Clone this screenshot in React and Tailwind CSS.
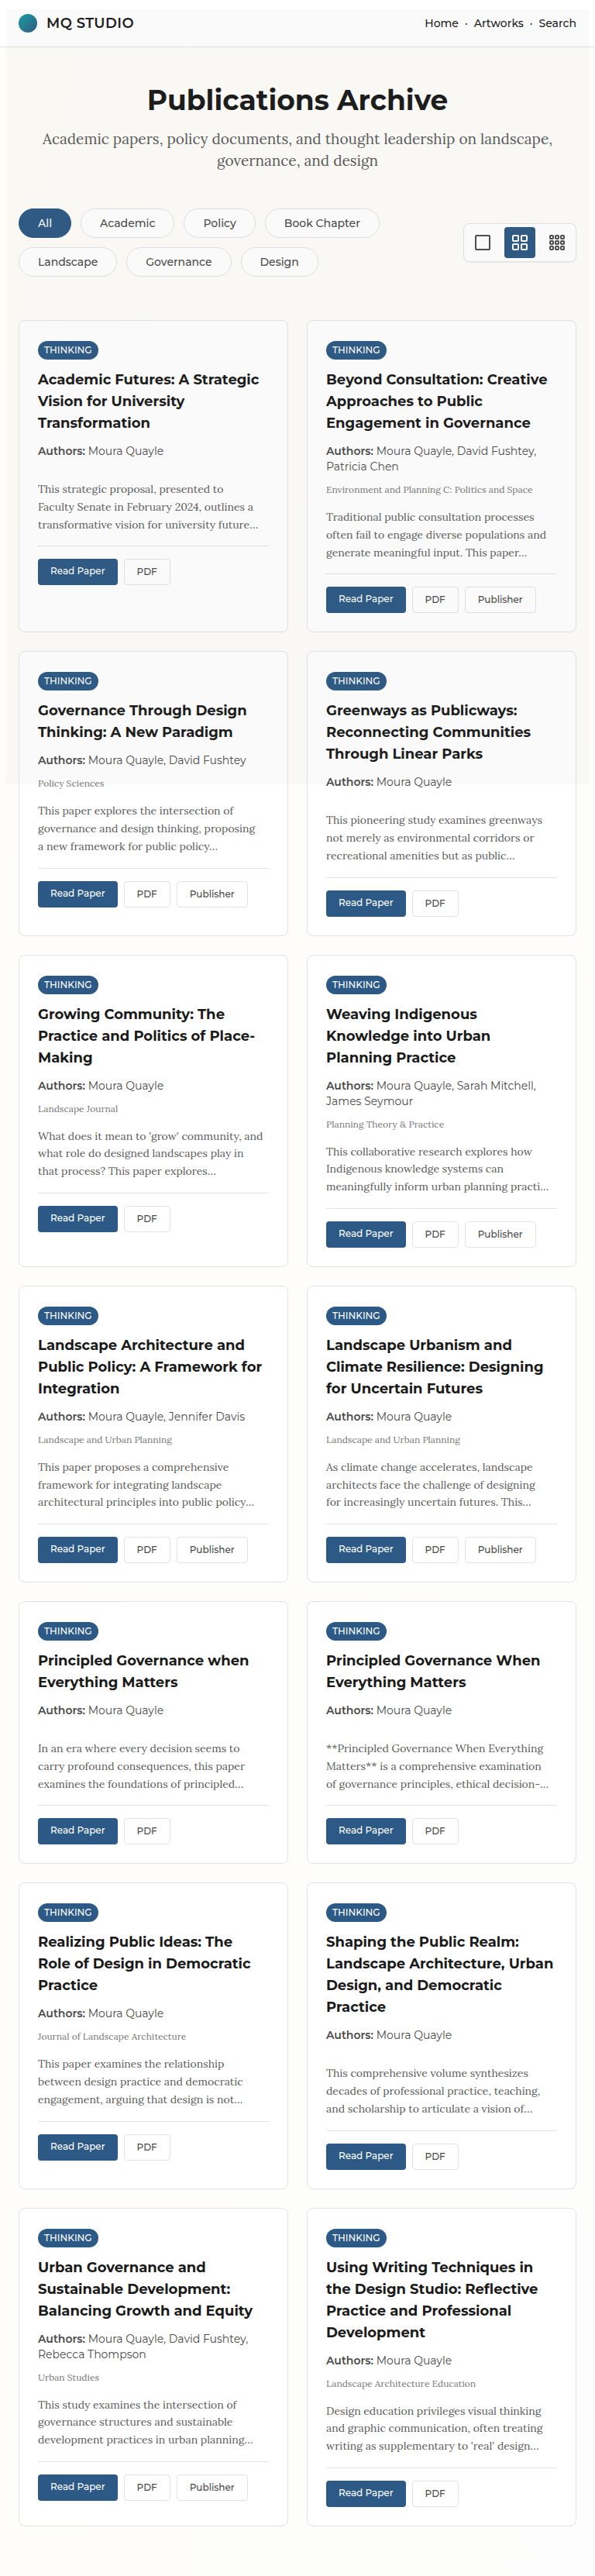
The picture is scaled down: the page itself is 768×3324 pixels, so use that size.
const sans = "font-['Montserrat','Open_Sans',sans-serif]";
const serif = "font-['Lora','Liberation_Serif',serif]";

const filters = ['All', 'Academic', 'Policy', 'Book Chapter', 'Landscape', 'Governance', 'Design'];

const papers = [
  { title: 'Academic Futures: A Strategic Vision for University Transformation', authors: 'Moura Quayle', abstract: 'This strategic proposal, presented to Faculty\u00a0Senate in February 2024, outlines a transformative vision for university future…' },
  { title: 'Beyond Consultation: Creative Approaches to Public Engagement in Governance', authors: 'Moura Quayle, David Fushtey, Patricia Chen', journal: 'Environment and Planning C: Politics and Space', abstract: 'Traditional public consultation processes often fail to engage diverse populations and generate meaningful input. This paper…', publisher: true },
  { title: 'Governance Through Design Thinking: A New Paradigm', authors: 'Moura Quayle, David Fushtey', journal: 'Policy Sciences', abstract: 'This paper explores the intersection of governance and design thinking, proposing a\u00a0new framework for public policy…', publisher: true },
  { title: 'Greenways as Publicways: Reconnecting Communities Through Linear Parks', authors: 'Moura Quayle', abstract: 'This pioneering study examines greenways not merely as environmental corridors or recreational amenities but as public…' },
  { title: 'Growing Community: The Practice and Politics of Place-Making', authors: 'Moura Quayle', journal: 'Landscape Journal', abstract: "What does it mean to 'grow' community, and what role do designed landscapes play in that\u00a0process? This paper explores…" },
  { title: 'Weaving Indigenous Knowledge into Urban Planning Practice', authors: 'Moura Quayle, Sarah Mitchell, James Seymour', journal: 'Planning Theory & Practice', abstract: 'This collaborative research explores how Indigenous knowledge systems can meaningfully inform urban planning practi…', publisher: true },
  { title: 'Landscape Architecture and Public Policy: A Framework for Integration', authors: 'Moura Quayle, Jennifer Davis', journal: 'Landscape and Urban Planning', abstract: 'This paper proposes a comprehensive framework for integrating landscape architectural principles into public policy…', publisher: true },
  { title: 'Landscape Urbanism and Climate Resilience: Designing for Uncertain Futures', authors: 'Moura Quayle', journal: 'Landscape and Urban Planning', abstract: 'As climate change accelerates, landscape architects face the challenge of designing for\u00a0increasingly uncertain futures. This…', publisher: true },
  { title: 'Principled Governance when Everything Matters', authors: 'Moura Quayle', abstract: 'In an era where every decision seems to carry profound consequences, this paper examines the foundations of principled…' },
  { title: 'Principled Governance When Everything Matters', authors: 'Moura Quayle', abstract: '**Principled Governance When Everything Matters** is a comprehensive examination of\u00a0governance principles, ethical decision-…' },
  { title: 'Realizing Public Ideas: The Role\u00a0of Design in Democratic Practice', authors: 'Moura Quayle', journal: 'Journal of Landscape Architecture', abstract: 'This paper examines the relationship between design practice and democratic engagement, arguing that design is not…' },
  { title: 'Shaping the Public Realm: Landscape Architecture, Urban Design, and Democratic Practice', authors: 'Moura Quayle', abstract: 'This comprehensive volume synthesizes decades of professional practice, teaching, and scholarship to articulate a vision of…' },
  { title: 'Urban Governance and Sustainable Development: Balancing Growth and Equity', authors: 'Moura Quayle, David Fushtey, Rebecca Thompson', journal: 'Urban Studies', abstract: 'This study examines the intersection of governance structures and sustainable development practices in urban planning…', publisher: true },
  { title: 'Using Writing Techniques in the Design Studio: Reflective Practice and Professional Development', authors: 'Moura Quayle', journal: 'Landscape Architecture Education', abstract: "Design education privileges visual thinking and graphic communication, often treating writing as supplementary to 'real' design…" },
];

function GridIcon({ count }) {
  const size = { 1: 18, 2: 7, 3: 4 }[count];
  const step = { 1: 0, 2: 11, 3: 7 }[count];
  const cells = Array.from({ length: count * count }, (_, i) => [i % count, Math.floor(i / count)]);
  return (
    <svg width="20" height="20" viewBox="0 0 20 20" fill="none" stroke="currentColor" strokeWidth="2" aria-hidden="true">
      {cells.map(([c, r]) => (
        <rect key={`${c}-${r}`} x={1 + c * step} y={1 + r * step} width={size} height={size} rx="1" />
      ))}
    </svg>
  );
}

const outlineButton = 'rounded border border-[#e1e3e6] px-4 py-2 text-[#4a4a4a]';

function PaperCard({ title, authors, journal, abstract, publisher }) {
  return (
    <article className="flex flex-col rounded-lg border border-[#e1e3e6] bg-white p-6">
      <div className="mb-3 flex pt-0.5">
        <span className="rounded-full bg-[#2c5985] px-2 py-1 text-xs font-medium text-white">THINKING</span>
      </div>
      <h2 className="mb-3 text-lg leading-7 font-bold text-[#1a1a1a]">{title}</h2>
      <p className="mb-3 text-sm text-[#4a4a4a]">
        <strong className="font-semibold">Authors:</strong> {authors}
      </p>
      <p className={`mb-4 text-xs text-[#777777] ${serif}`}>{journal}</p>
      <p className={`mb-4 text-sm leading-relaxed text-[#5a5a5a] ${serif}`}>{abstract}</p>
      <div className="flex gap-2 border-t border-[#e1e3e6] pt-4 text-xs font-medium">
        <a href="#read" className="rounded bg-[#2c5985] px-4 py-2 text-white">Read Paper</a>
        <a href="#pdf" className={outlineButton}>PDF</a>
        {publisher && <a href="#publisher" className={outlineButton}>Publisher</a>}
      </div>
    </article>
  );
}

export default function App() {
  return (
    <div className={`relative bg-linear-to-br from-[#fefdf8] to-[#fdfdfd] ${sans}`}>
      <header className="flex h-[61px] items-center justify-between border-b border-[#e1e3e6] bg-white px-6 text-[#1a1a1a]">
        <a href="#top" className="flex items-center gap-3 text-lg font-semibold tracking-wide">
          <span className="size-6 rounded-full bg-linear-to-br from-[#0d9f9f] to-[#2c5985]" />
          MQ STUDIO
        </a>
        <nav className="flex gap-2 text-sm font-medium">
          <a href="#home">Home</a>
          <span>·</span>
          <a href="#artworks">Artworks</a>
          <span>·</span>
          <a href="#search">Search</a>
        </nav>
      </header>
      <main className="px-6 pt-12 pb-16">
        <div className="mx-auto mb-12 max-w-2xl text-center">
          <h1 className="mb-4 text-4xl font-bold text-[#1a1a1a]">Publications Archive</h1>
          <p className={`text-[19px] leading-7 text-[#5a5a5a] ${serif}`}>
            Academic papers, policy documents, and thought leadership on landscape, governance, and design
          </p>
        </div>
        <div className="mb-14 flex items-center justify-between gap-6">
          <div className="flex flex-wrap gap-3">
            {filters.map((f) => (
              <button
                key={f}
                type="button"
                className={`rounded-full border px-6 py-2 text-sm font-medium ${f === 'All' ? 'border-[#2c5985] bg-[#2c5985] text-white' : 'border-[#e1e3e6] bg-white text-[#4a4a4a]'}`}
              >
                {f}
              </button>
            ))}
          </div>
          <div className="flex shrink-0 gap-2 rounded-lg border border-[#e1e3e6] bg-white p-1 shadow-xs">
            {[1, 2, 3].map((n) => (
              <button
                key={n}
                type="button"
                aria-label={`${n} per row`}
                className={`flex size-10 items-center justify-center rounded ${n === 2 ? 'bg-[#2c5985] text-white' : 'text-[#4a4a4a]'}`}
              >
                <GridIcon count={n} />
              </button>
            ))}
          </div>
        </div>
        <div className="grid grid-cols-2 gap-6">
          {papers.map((p) => (
            <PaperCard key={p.title} {...p} />
          ))}
        </div>
      </main>
      <div className="pointer-events-none absolute inset-x-2 top-3 h-[1000px] bg-[#808080]/4" />
    </div>
  );
}
